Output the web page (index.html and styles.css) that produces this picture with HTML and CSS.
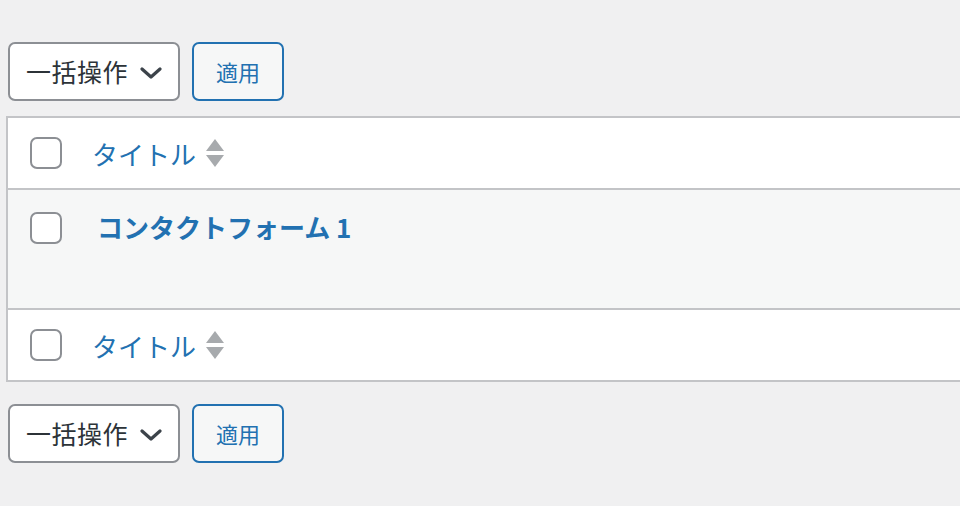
FILE: index.html
```html
<!DOCTYPE html>
<html lang="ja">
<head>
  <meta charset="UTF-8" />
  <title>コンタクトフォーム</title>
  <link rel="stylesheet" href="styles.css">
</head>
<body>
  <div class="tablenav top">
    <div class="bulk-select">
      <span>一括操作</span>
      <svg class="chevron" width="22" height="14" viewBox="0 0 22 14"><polyline points="2,3 11,11 20,3" fill="none" stroke="#3c434a" stroke-width="3.2" stroke-linecap="round" stroke-linejoin="round"/></svg>
    </div>
    <button class="apply">適用</button>
  </div>

  <div class="list-table">
    <div class="row row-head">
      <span class="check"></span>
      <a class="col-title">タイトル</a>
      <svg class="sort" width="18" height="30" viewBox="0 0 18 30"><polygon points="9,0 18,12 0,12" fill="#a7aaad"/><polygon points="0,16 18,16 9,28" fill="#a7aaad"/></svg>
    </div>
    <div class="row row-body">
      <span class="check"></span>
      <a class="row-title">コンタクトフォーム 1</a>
    </div>
    <div class="row row-foot">
      <span class="check"></span>
      <a class="col-title">タイトル</a>
      <svg class="sort" width="18" height="30" viewBox="0 0 18 30"><polygon points="9,0 18,12 0,12" fill="#a7aaad"/><polygon points="0,16 18,16 9,28" fill="#a7aaad"/></svg>
    </div>
  </div>

  <div class="tablenav bottom">
    <div class="bulk-select">
      <span>一括操作</span>
      <svg class="chevron" width="22" height="14" viewBox="0 0 22 14"><polyline points="2,3 11,11 20,3" fill="none" stroke="#3c434a" stroke-width="3.2" stroke-linecap="round" stroke-linejoin="round"/></svg>
    </div>
    <button class="apply">適用</button>
  </div>
</body>
</html>
```

FILE: styles.css
```css
body {
  margin: 0;
  background: #f0f0f1;
  font-family: "Noto Sans CJK JP", "Noto Sans", sans-serif;
  color: #2c3338;
  overflow: hidden;
}
.tablenav {
  display: flex;
  gap: 12px;
  padding-left: 8px;
  height: 59px;
}
.tablenav.top {
  margin-top: 42px;
  margin-bottom: 15px;
}
.tablenav.bottom {
  margin-top: 22px;
}
.bulk-select {
  display: flex;
  align-items: center;
  box-sizing: border-box;
  width: 172px;
  height: 59px;
  padding: 0 16px 0 16px;
  background: #fff;
  border: 2px solid #8c8f94;
  border-radius: 7px;
  font-size: 25px;
  color: #2c3338;
}
.bulk-select span {
  flex: 1;
  letter-spacing: 0.5px;
  margin-top: -2px;
}
.chevron {
  margin-top: 2px;
}
.apply {
  box-sizing: border-box;
  width: 92px;
  height: 59px;
  background: #f6f7f7;
  border: 2px solid #2271b1;
  border-radius: 7px;
  color: #2271b1;
  font-family: inherit;
  font-size: 22px;
  padding: 0 0 2px 0;
}
.list-table {
  margin-left: 6px;
  width: calc(100% + 4px);
  background: #fff;
  border: 2px solid #c3c4c7;
}
.row {
  display: flex;
  align-items: center;
  height: 70px;
}
.row-head {
  border-bottom: 2px solid #c3c4c7;
}
.row-foot {
  border-top: 2px solid #c3c4c7;
}
.row-body {
  align-items: flex-start;
  box-sizing: border-box;
  height: 118px;
  padding-top: 22px;
  background: #f6f7f7;
}
.check {
  box-sizing: border-box;
  width: 32px;
  height: 32px;
  margin-left: 22px;
  background: #fff;
  border: 2px solid #8c8f94;
  border-radius: 7px;
  flex-shrink: 0;
}
.col-title {
  margin-left: 30px;
  font-size: 26px;
  color: #2271b1;
}
.sort {
  margin-left: 10px;
  margin-top: 2px;
}
.row-title {
  margin-left: 35px;
  font-size: 26px;
  font-weight: bold;
  line-height: 30px;
  color: #2271b1;
}
```
